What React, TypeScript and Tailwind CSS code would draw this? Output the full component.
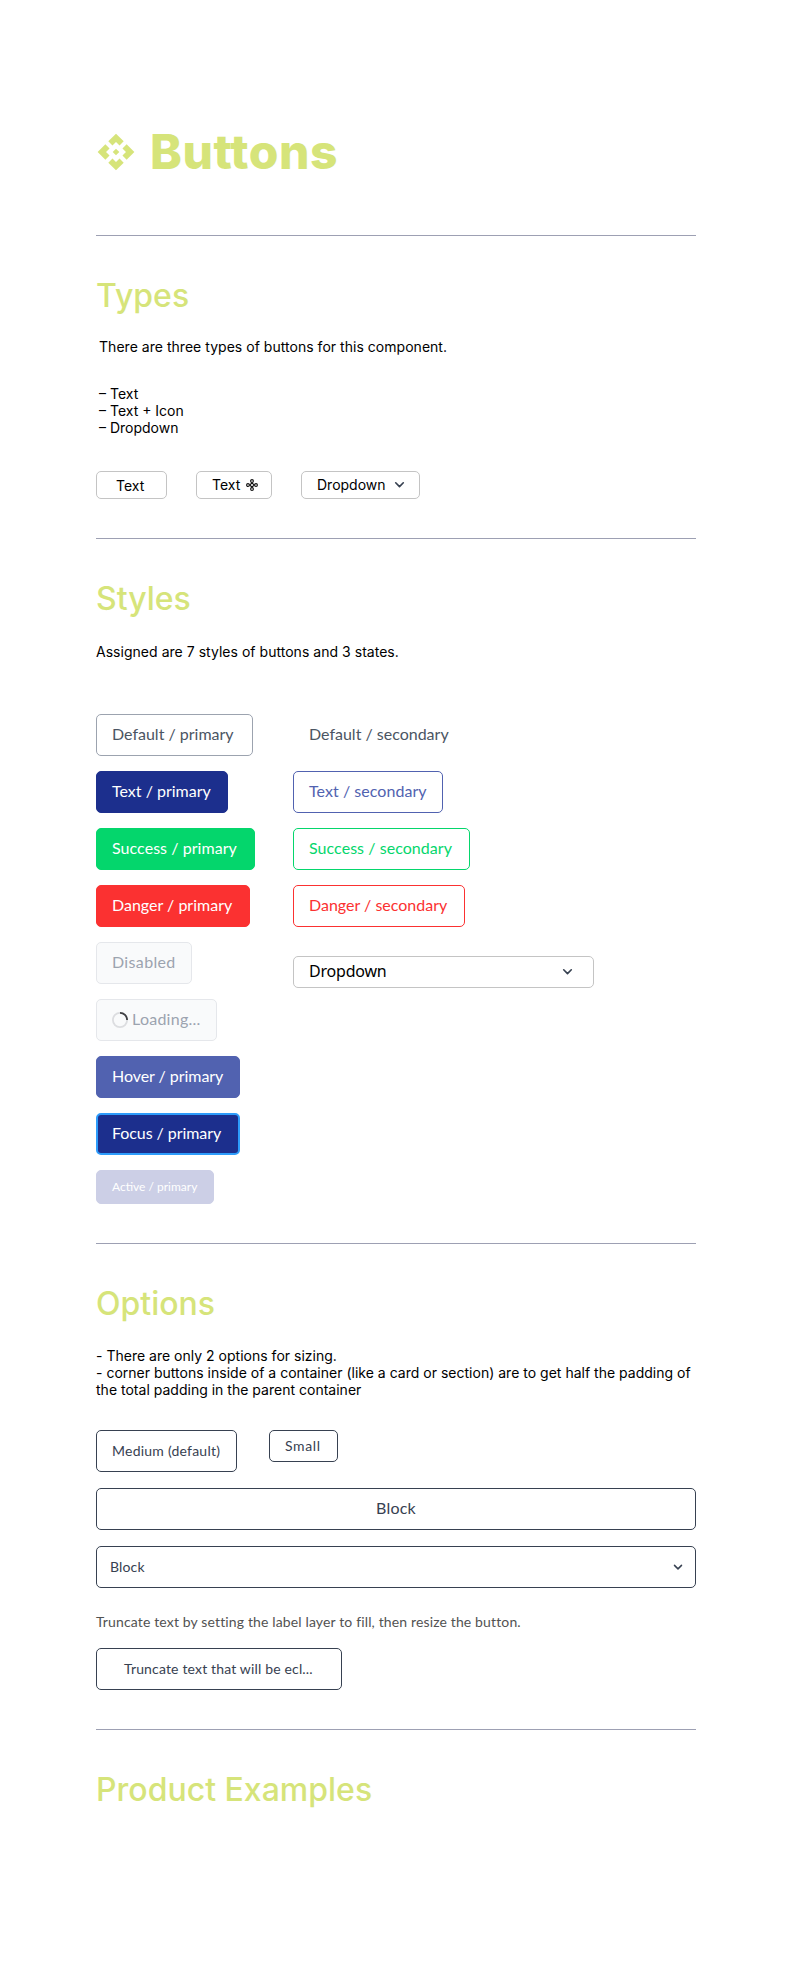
import React from "react";

const INTER = "font-['Inter',sans-serif]";
const LATO = "font-['Lato',sans-serif]";

function Rule() {
  return <div className="h-px w-full shrink-0 bg-[#9da0b3]" />;
}

function Heading({ children }: { children: React.ReactNode }) {
  return <h2 className="h-20 pt-10 text-[32px] font-medium leading-10 text-[#d6e47a]">{children}</h2>;
}

function Chevron({ size }: { size: number }) {
  return (
    <svg width={size} height={size} viewBox="0 0 12 12" fill="none" stroke="#374151" strokeWidth="1.5" strokeLinecap="round" strokeLinejoin="round">
      <path d="M2.5 4.4 6 7.9l3.5-3.5" />
    </svg>
  );
}

function ApiIcon() {
  return (
    <svg width="40" height="40" viewBox="0 0 24 24" fill="#d6e47a">
      <path d="M12 6l2.12 2.12 2.5-2.5L12 1 7.38 5.62l2.5 2.5L12 6zm-6 6l2.12-2.12-2.5-2.5L1 12l4.62 4.62 2.5-2.5L6 12zm12 0l-2.12 2.12 2.5 2.5L23 12l-4.62-4.62-2.5 2.5L18 12zm-6 6l-2.12-2.12-2.5 2.5L12 23l4.62-4.62-2.5-2.5L12 18z" />
      <path d="M14 12l-2 2-2-2 2-2z" />
    </svg>
  );
}

function CloverIcon() {
  return (
    <svg width="12" height="12" viewBox="0 0 12 12" fill="none" stroke="#111" strokeWidth="1.1">
      <circle cx="6" cy="2" r="1.4" />
      <circle cx="6" cy="10" r="1.4" />
      <circle cx="2" cy="6" r="1.4" />
      <circle cx="10" cy="6" r="1.4" />
      <path d="M6 3.8 8.2 6 6 8.2 3.8 6z" />
    </svg>
  );
}

function Spinner() {
  return (
    <svg width="16" height="16" viewBox="0 0 16 16" fill="none" strokeWidth="1.8">
      <circle cx="8" cy="8" r="7.1" stroke="#dcdde0" />
      <path d="M8 .9A7.1 7.1 0 0 1 15.1 8" stroke="#404044" />
    </svg>
  );
}

const base = "flex shrink-0 items-center whitespace-nowrap rounded-[5px]";

function Btn({ label, cls, track = "", children }: { label: string; cls: string; track?: string; children?: React.ReactNode }) {
  return (
    <button className={`${base} border pl-[15px] ${cls}`}>
      {children}
      <span className={track}>{label}</span>
    </button>
  );
}

export default function App() {
  return (
    <main className={`h-[1983px] w-[792px] bg-white px-24 pt-[122px] text-black ${INTER}`}>
      <h1 className="flex h-[60px] items-center text-[48px] font-extrabold leading-[60px] text-[#d6e47a]">
        <ApiIcon />
        <span className="ml-[14px] tracking-[0.5px]">Buttons</span>
      </h1>
      <div className="h-[53px]" />
      <Rule />
      <section className="h-[302px]">
        <Heading>Types</Heading>
        <p className="ml-[3px] mt-[22px] text-[14px] leading-[17px] tracking-[0.03px]">There are three types of buttons for this component.</p>
        <p className="ml-[3px] mt-[30px] text-[14px] leading-[17px]">
          – Text
          <br />– Text + Icon
          <br />– Dropdown
        </p>
        <div className="mt-[35px] flex h-7 text-[14px] leading-[17px]">
          <button className={`${base} h-7 w-[71px] border border-[#c4c4c4] pl-[19px] pt-px`}>Text</button>
          <button className={`${base} ml-[29px] h-7 w-[76px] gap-[6px] border border-[#c4c4c4] pb-px pl-[15px]`}>
            Text
            <CloverIcon />
          </button>
          <button className={`${base} ml-[29px] h-7 w-[119px] gap-[7px] border border-[#c4c4c4] pb-px pl-[15px]`}>
            Dropdown
            <Chevron size={13} />
          </button>
        </div>
      </section>
      <Rule />
      <section className="h-[704px]">
        <Heading>Styles</Heading>
        <p className="mt-6 text-[14px] leading-[17px] tracking-[0.03px]">Assigned are 7 styles of buttons and 3 states.</p>
        <div className={`mt-[54px] flex text-[16px] leading-6 ${LATO}`}>
          <div className="flex w-[197px] flex-col items-start gap-[15px]">
            <Btn label="Default / primary" cls="h-[42px] w-[157px] border-[#9ca3af] pb-0.5 text-[#4b5563]" />
            <Btn label="Text / primary" cls="h-[42px] w-[132px] border-[#1c2f8d] bg-[#1c2f8d] pb-0.5 text-white" />
            <Btn label="Success / primary" cls="h-[42px] w-[159px] border-[#04d66c] bg-[#04d66c] pb-0.5 text-white" track="tracking-[0.05px]" />
            <Btn label="Danger / primary" cls="h-[42px] w-[154px] border-[#fb3131] bg-[#fb3131] pb-0.5 text-white" />
            <Btn label="Disabled" cls="h-[42px] w-24 border-[#e5e7eb] bg-[#f9fafb] pb-0.5 text-[#9ca3af]" track="tracking-[0.35px]" />
            <Btn label="Loading..." cls="h-[42px] w-[121px] gap-1 border-[#e5e7eb] bg-[#f9fafb] text-[#9ca3af]" track="pb-0.5 tracking-[0.25px]">
              <Spinner />
            </Btn>
            <Btn label="Hover / primary" cls="h-[42px] w-36 border-[#5162b0] bg-[#5162b0] pb-0.5 text-white" track="tracking-[-0.05px]" />
            <button className={`${base} h-[42px] w-36 border-2 border-[#2d9cfb] bg-[#1c2f8d] pb-0.5 pl-[14px] tracking-[-0.07px] text-white`}>
              <span>Focus / primary</span>
            </button>
            <Btn label="Active / primary" cls="h-[34px] w-[118px] border-[#cccfe6] bg-[#cccfe6] text-[12px] text-white" />
          </div>
          <div className="flex flex-col items-start gap-[15px]">
            <Btn label="Default / secondary" cls="h-[42px] border-transparent pb-0.5 text-[#4b5563]" />
            <Btn label="Text / secondary" cls="h-[42px] w-[150px] border-[#5162b0] pb-0.5 text-[#5162b0]" track="tracking-[0.05px]" />
            <Btn label="Success / secondary" cls="h-[42px] w-[177px] border-[#04d66c] pb-0.5 text-[#04d66c]" track="tracking-[0.05px]" />
            <Btn label="Danger / secondary" cls="h-[42px] w-[172px] border-[#fb3131] pb-0.5 text-[#fb3131]" />
            <button className={`${base} mt-[14px] h-8 w-[301px] justify-between border border-[#c4c4c4] pb-0.5 pl-[15px] pr-[19px] font-['Noto_Sans',sans-serif] tracking-[-0.2px]`}>
              Dropdown
              <Chevron size={13} />
            </button>
          </div>
        </div>
      </section>
      <Rule />
      <section className="h-[485px]">
        <Heading>Options</Heading>
        <p className="mt-[23px] whitespace-nowrap text-[14px] leading-[17px] tracking-[0.01px]">
          - There are only 2 options for sizing.
          <br />- corner buttons inside of a container (like a card or section) are to get half the padding of
          <br />
          the total padding in the parent container
        </p>
        <div className={`mt-8 flex flex-col text-[14px] leading-5 text-[#374151] ${LATO}`}>
          <div className="flex items-start gap-8">
            <Btn label="Medium (default)" cls="h-[42px] w-[141px] border-[#374151]" track="tracking-[0.23px]" />
            <Btn label="Small" cls="h-8 w-[69px] border-[#374151]" track="tracking-[0.65px]" />
          </div>
          <button className={`${base} mt-4 h-[42px] w-full justify-center border border-[#374151] pb-0.5 text-[16px] tracking-[0.2px]`}>Block</button>
          <button className={`${base} mt-4 h-[42px] w-full justify-between border border-[#374151] pl-[13px] pr-[11px] tracking-[0.15px]`}>
            Block
            <Chevron size={12} />
          </button>
          <p className="mt-6 tracking-[0.14px] text-[#525252]">Truncate text by setting the label layer to fill, then resize the button.</p>
          <button className={`${base} mt-4 h-[42px] w-[246px] border border-[#374151] pl-[27px] tracking-[0.16px]`}>Truncate text that will be ecl...</button>
        </div>
      </section>
      <Rule />
      <Heading>Product Examples</Heading>
    </main>
  );
}
